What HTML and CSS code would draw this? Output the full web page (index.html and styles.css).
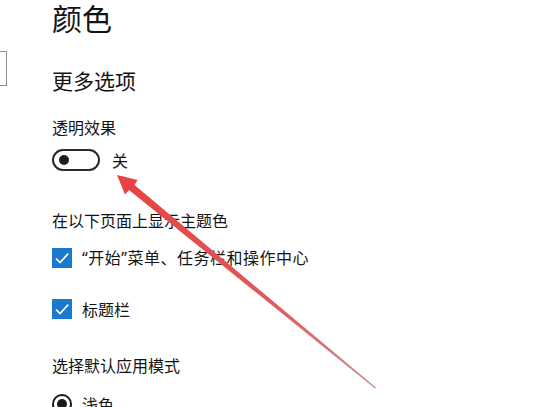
FILE: index.html
```html
<!DOCTYPE html>
<html lang="zh-CN">
<head>
<meta charset="utf-8">
<title>颜色</title>
<link rel="stylesheet" href="styles.css">
</head>
<body>
<div class="page">
  <aside class="sidebar">
    <div class="search-box"></div>
  </aside>
  <main class="main">
    <h1 class="title">颜色</h1>
    <h2 class="section">更多选项</h2>
    <div class="label label-transp">透明效果</div>
    <div class="toggle-row">
      <span class="toggle"><span class="thumb"></span></span>
      <span class="toggle-text">关</span>
    </div>
    <div class="label label-accent">在以下页面上显示主题色</div>
    <div class="check-row row-first">
      <svg class="checkbox" width="20" height="20" viewBox="0 0 20 20"><rect width="20" height="20" fill="#1b78cf"/><polyline points="4,10.5 8,14.5 16.2,5.6" fill="none" stroke="#fff" stroke-width="1.7"/></svg>
      <span class="row-text latin-quotes">“开始”菜单、任务栏和操作中心</span>
    </div>
    <div class="check-row row-second">
      <svg class="checkbox" width="20" height="20" viewBox="0 0 20 20"><rect width="20" height="20" fill="#1b78cf"/><polyline points="4,10.5 8,14.5 16.2,5.6" fill="none" stroke="#fff" stroke-width="1.7"/></svg>
      <span class="row-text">标题栏</span>
    </div>
    <div class="label label-mode">选择默认应用模式</div>
    <div class="check-row row-radio">
      <span class="radio"><span class="radio-dot"></span></span>
      <span class="row-text">浅色</span>
    </div>
  </main>
  <svg class="arrow" width="533" height="407" viewBox="0 0 533 407">
    <defs>
      <linearGradient id="ag" x1="117" y1="175" x2="376" y2="388" gradientUnits="userSpaceOnUse">
        <stop offset="0" stop-color="#e8403f"/>
        <stop offset="0.6" stop-color="#e05a5c"/>
        <stop offset="1" stop-color="#c98d96"/>
      </linearGradient>
    </defs>
    <polygon points="117,175 137.5,180 134.5,185 376,387.5 375,388.5 129,190 125,194.5" fill="url(#ag)"/>
  </svg>
</div>
</body>
</html>
```

FILE: styles.css
```css
html, body {
  margin: 0;
  padding: 0;
  background: #ffffff;
}

body {
  font-family: "Noto Sans CJK SC", "Noto Sans", sans-serif;
  color: #141414;
  overflow: hidden;
}

.page {
  position: relative;
  display: flex;
  width: 533px;
  height: 407px;
  overflow: hidden;
}

.sidebar {
  width: 8px;
  flex: none;
}

.search-box {
  margin-top: 51px;
  width: 6px;
  height: 33px;
  border: 1.5px solid #8f8f8f;
  border-left: none;
}

.main {
  padding-left: 44px;
  padding-top: 2px;
  display: flex;
  flex-direction: column;
  align-items: flex-start;
}

.title {
  margin: 0;
  font-size: 30px;
  line-height: 30px;
  font-weight: 400;
}

.section {
  margin: 34px 0 0;
  font-size: 21px;
  line-height: 28px;
  font-weight: 400;
}

.label {
  font-size: 16px;
  line-height: 22px;
}

.label-transp {
  margin-top: 22px;
}

.toggle-row {
  margin-top: 11px;
  display: flex;
  align-items: center;
}

.toggle {
  box-sizing: border-box;
  width: 48px;
  height: 22px;
  border: 2px solid #2a2a2a;
  border-radius: 11px;
  display: flex;
  align-items: center;
  padding-left: 5px;
}

.thumb {
  width: 10px;
  height: 10px;
  border-radius: 50%;
  background: #1e1e1e;
}

.toggle-text {
  margin-left: 12px;
  font-size: 16px;
  line-height: 22px;
}

.label-accent {
  margin-top: 38px;
}

.check-row {
  display: flex;
  align-items: center;
  height: 20px;
}

.row-first {
  margin-top: 17px;
}

.row-second {
  margin-top: 31px;
}

.checkbox {
  display: block;
  flex: none;
}

.row-text {
  margin-left: 10px;
  font-size: 16px;
  line-height: 20px;
}

.latin-quotes {
  font-family: "Noto Sans", "Noto Sans CJK SC", sans-serif;
  letter-spacing: 0.5px;
}

.label-mode {
  margin-top: 35px;
}

.row-radio {
  margin-top: 18px;
}

.radio {
  box-sizing: border-box;
  width: 20px;
  height: 20px;
  border: 2px solid #1a1a1a;
  border-radius: 50%;
  display: flex;
  align-items: center;
  justify-content: center;
  flex: none;
}

.radio-dot {
  width: 10px;
  height: 10px;
  border-radius: 50%;
  background: #1a1a1a;
}

.arrow {
  position: absolute;
  left: 0;
  top: 0;
  pointer-events: none;
}
```
